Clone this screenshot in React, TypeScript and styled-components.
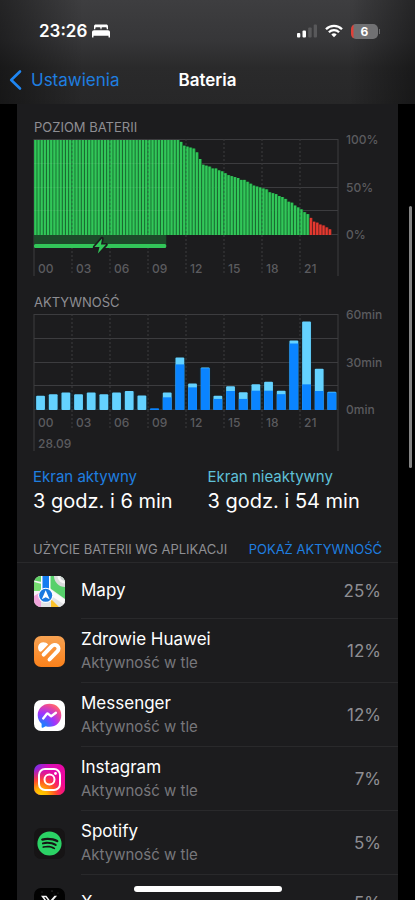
import React from "react";
import styled, { createGlobalStyle } from "styled-components";
import { FaSpotify, FaXTwitter } from "react-icons/fa6";

const color = {
  card: "#1c1c1e",
  text: "#ffffff",
  muted: "#8e8e93",
  axis: "#5b5b5f",
  grid: "#3c3c3f",
  link: "#1f7fe0",
  blue: "#0a84ff",
  cyan: "#64d2ff",
  green: "#32c759",
  red: "#e5392f",
};

const GlobalStyle = createGlobalStyle`
  * { box-sizing: border-box; }
  body {
    margin: 0;
    background: #000;
    color: ${color.text};
    font-family: Inter, "Liberation Sans", sans-serif;
  }
`;

const Screen = styled.div`
  position: relative;
  height: 100vh;
  overflow: hidden;
  display: flex;
  flex-direction: column;
`;

const TopBar = styled.header`
  flex: none;
  background:
    linear-gradient(90deg, rgba(0, 0, 0, 0.42), rgba(0, 0, 0, 0) 20%, rgba(0, 0, 0, 0) 84%, rgba(0, 0, 0, 0.4)),
    linear-gradient(180deg, #3e3e40, #363638 40%, #2a2a2b 65%, #272728);
`;

const StatusBar = styled.div`
  display: flex;
  justify-content: space-between;
  align-items: center;
  height: 60px;
  padding: 2px 35px 0 39px;
`;

const StatusGroup = styled.div<{ $gap: number }>`
  display: flex;
  align-items: center;
  gap: ${(p) => p.$gap}px;
`;

const Clock = styled.time`
  font-size: 17px;
  line-height: 20px;
  font-weight: 600;
`;

const NavBar = styled.nav`
  display: grid;
  grid-template-columns: 1fr auto 1fr;
  align-items: center;
  height: 44px;
  padding: 0 8px 4px;
`;

const BackLink = styled.a`
  display: flex;
  align-items: center;
  gap: 8px;
  color: ${color.link};
  font-size: 17px;
  line-height: 22px;
  text-decoration: none;
`;

const NavTitle = styled.h1`
  margin: 0;
  font-size: 17px;
  line-height: 22px;
  font-weight: 600;
`;

const Card = styled.main`
  flex: none;
  margin: 0 17px;
  background: ${color.card};
`;

const ChartSection = styled.section`
  padding: 14px 0 1px 17px;
`;

const Caption = styled.h2`
  margin: 0;
  color: ${color.muted};
  font-size: 13px;
  line-height: 18px;
  font-weight: 400;
`;

const ChartBody = styled.div`
  display: flex;
  margin-top: 3px;
`;

const Plot = styled.svg`
  display: block;
  flex: 1;
  min-width: 0;
  height: 139px;
  overflow: visible;
`;

const AxisScale = styled.svg`
  display: block;
  flex: none;
  width: 60px;
  height: 139px;
  overflow: visible;
`;

const AxisText = styled.text`
  fill: ${color.axis};
  font-size: 12px;
  font-weight: 500;
`;

const Summary = styled.section`
  display: grid;
  grid-template-columns: 1fr 1fr;
  padding: 13px 16px 0;
`;

const SummaryLabel = styled.div<{ $tone: string }>`
  color: ${(p) => p.$tone};
  font-size: 15px;
  line-height: 20px;
`;

const SummaryValue = styled.div`
  font-size: 20px;
  line-height: 28px;
`;

const ListHeader = styled.div`
  display: flex;
  justify-content: space-between;
  align-items: center;
  height: 48px;
  padding: 20px 16px 0;
  border-bottom: 1px solid #29292b;
  white-space: nowrap;
`;

const TextButton = styled.button`
  padding: 0;
  border: 0;
  background: none;
  color: ${color.link};
  font: inherit;
  font-size: 13px;
  line-height: 18px;
`;

const AppList = styled.ul`
  margin: 0;
  padding: 0;
  list-style: none;
`;

const AppRow = styled.li`
  display: flex;
  align-items: center;
  gap: 16px;
  padding-left: 17px;
`;

const AppIcon = styled.svg`
  flex: none;
  width: 31px;
  height: 31px;
  border-radius: 7px;
`;

const AppDetails = styled.div<{ $tall: boolean }>`
  flex: 1;
  display: flex;
  align-items: center;
  justify-content: space-between;
  height: ${(p) => (p.$tall ? 64 : 56)}px;
  padding-right: 17px;
  border-bottom: 1px solid #29292b;
`;

const AppName = styled.div`
  font-size: 17px;
  line-height: 23px;
`;

const AppNote = styled.div`
  color: #77777b;
  font-size: 15px;
  line-height: 23px;
`;

const Percent = styled.div`
  color: ${color.muted};
  font-size: 17px;
  line-height: 24px;
`;

const ScrollThumb = styled.div`
  position: absolute;
  top: 206px;
  right: 3px;
  width: 3px;
  height: 262px;
  border-radius: 2px;
  background: #858585;
`;

const HomeIndicator = styled.div`
  position: absolute;
  bottom: 8px;
  left: 50%;
  width: 148px;
  height: 6px;
  margin-left: -74px;
  border-radius: 3px;
  background: #fff;
`;

const batteryLevels: number[] = [
  ...Array(46).fill(100),
  98, 94, 93, 92, 91, 87, 80, 74, 73, 72, 70, 70, 68, 67, 65, 63, 62, 61, 60, 58, 58, 56, 54, 52,
  51, 50, 49, 48, 45, 44, 43, 41, 40, 38, 35, 34, 31, 29, 27, 24, 22, 18, 14, 13, 11, 10, 8, 6,
];
const LOW_FROM = 87;

/* Minutes per hour: [screen on, screen off] */
const activity: [number, number][] = [
  [0, 9], [0, 10], [0, 11], [0, 10], [0, 11], [0, 10], [0, 11], [0, 12],
  [0, 9.2], [0.9, 0], [8, 3.1], [28.8, 4.4], [14.3, 2.5], [26.4, 0.5], [7, 2], [12, 3],
  [7, 4.2], [12.2, 4], [12.2, 5.7], [10, 2.2], [42, 1.9], [16.2, 39.7], [12, 14], [11.1, 0.4],
];

const hours = ["00", "03", "06", "09", "12", "15", "18", "21"];
const PLOT_H = 95;
const pct = (n: number) => `${n}%`;

function Grid({ dashEnd }: { dashEnd: number }) {
  return (
    <g stroke={color.grid} strokeWidth="1">
      {[0, 1, 2, 3, 4].map((n) => (
        <line key={n} x1="0" x2="100%" y1={0.5 + Math.round((PLOT_H * n) / 4)} y2={0.5 + Math.round((PLOT_H * n) / 4)} />
      ))}
      {hours.map((h, n) => (
        <line
          key={h}
          x1={pct(n * 12.5)}
          x2={pct(n * 12.5)}
          y1="0"
          y2={n === 0 ? 137 : dashEnd}
          strokeDasharray={n === 0 ? undefined : "2 2"}
        />
      ))}
      <line x1="100%" x2="100%" y1="0" y2="137" />
    </g>
  );
}

function HourLabels({ y }: { y: number }) {
  return (
    <>
      {hours.map((h, n) => (
        <AxisText key={h} x={pct(n * 12.5)} dx="4" y={y}>
          {h}
        </AxisText>
      ))}
    </>
  );
}

function Scale({ labels }: { labels: string[] }) {
  return (
    <AxisScale>
      {labels.map((label, n) => (
        <AxisText key={label} x="8" y={5 + (PLOT_H / 2) * n}>
          {label}
        </AxisText>
      ))}
    </AxisScale>
  );
}

function BatteryChart() {
  const slot = 100 / 96;
  return (
    <ChartBody>
      <Plot role="img" aria-label="Poziom baterii">
        <Grid dashEnd={136} />
        {batteryLevels.map((level, n) => {
          const h = (level / 100) * PLOT_H;
          const low = n >= LOW_FROM;
          return (
            <g key={n}>
              <rect x={pct(n * slot)} y={96 - h} width={pct(slot)} height={h} fill={low ? "#7d2624" : "#1b7e38"} />
              <rect x={pct(n * slot + 0.1)} y={96 - h} width={pct(slot * 0.66)} height={h} fill={low ? color.red : color.green} />
            </g>
          );
        })}
        {[24, 48, 71].map((y) => (
          <line key={y} x1="0" x2="46%" y1={y + 0.5} y2={y + 0.5} stroke="#fff" strokeOpacity="0.06" />
        ))}
        {[1, 2, 3, 4, 5, 6, 7].map((n) => (
          <line key={n} x1={pct(n * 12.5)} x2={pct(n * 12.5)} y1="0" y2="96" stroke="#303034" strokeOpacity="0.4" strokeDasharray="2 2" />
        ))}
        <rect x="0" y="96" width="43.5%" height="10" fill="#1d4b2a" />
        <rect x="0" y="105" width="43.5%" height="4" rx="1.5" fill={color.green} />
        <svg x="21.8%" y="107" overflow="visible">
          <path
            d="M1.8-7.6-5.8 1.1H-.8L-2.4 7.6 5.8-1.4H.7Z"
            fill={color.green}
            stroke={color.card}
            strokeWidth="3.4"
            strokeLinejoin="round"
            paintOrder="stroke"
          />
        </svg>
        <HourLabels y={134} />
      </Plot>
      <Scale labels={["100%", "50%", "0%"]} />
    </ChartBody>
  );
}

function ActivityChart() {
  const slot = 100 / 24;
  const unit = PLOT_H / 60;
  return (
    <ChartBody>
      <Plot role="img" aria-label="Aktywność">
        <Grid dashEnd={115} />
        {activity.map(([on, off], n) => {
          const total = (on + off) * unit;
          const x = pct(n * slot + 0.7);
          return (
            <g key={n}>
              <rect x={pct(n * slot)} y={96 - total} width={pct(slot)} height={total} fill="#0d2b3c" fillOpacity={n < 10 ? 0.5 : 0.25} />
              <rect x={x} y={96 - total} width="2.9%" height={total} rx="1" fill={off ? color.cyan : color.blue} />
              <rect x={x} y={96 - on * unit} width="2.9%" height={on * unit} fill={color.blue} />
            </g>
          );
        })}
        <HourLabels y={113} />
        <AxisText x="0" dx="4" y="134">
          28.09
        </AxisText>
      </Plot>
      <Scale labels={["60min", "30min", "0min"]} />
    </ChartBody>
  );
}

function BedIcon() {
  return (
    <svg width="18" height="14" viewBox="0 0 18 14" fill="#fff" aria-hidden="true">
      <path d="M2 5.3V2.2C2 1 2.8.4 3.8.4h10.4c1 0 1.8.6 1.8 1.8v3.1h-1.3V4.2c0-.6-.3-.9-.9-.9h-3.4c-.6 0-.9.3-.9.9v1.1h-1V4.2c0-.6-.3-.9-.9-.9H4.2c-.6 0-.9.3-.9.9v1.1Z" />
      <path d="M0 13V8.2C0 7 .8 6.2 2 6.2h14c1.2 0 2 .8 2 2V13c0 .4-.2.6-.6.6h-.3c-.4 0-.6-.2-.6-.6v-1.3h-15V13c0 .4-.2.6-.6.6H.6C.2 13.6 0 13.4 0 13Z" />
    </svg>
  );
}

function SignalIcon() {
  return (
    <svg width="20" height="14" viewBox="0 0 20 14" fill="#fff" aria-hidden="true">
      <rect x="0" y="9" width="3.3" height="4.5" rx="1" />
      <rect x="5.5" y="6.5" width="3.5" height="7" rx="1" />
      <rect x="11.2" y="3.5" width="3.5" height="10" rx="1" fill="#58585a" />
      <rect x="16.7" y="0.5" width="3.3" height="13" rx="1" fill="#58585a" />
    </svg>
  );
}

function WifiIcon() {
  return (
    <svg width="18" height="14" viewBox="0 0 18 14" fill="none" stroke="#fff" strokeWidth="2.3" aria-hidden="true">
      <path d="M1 5.2a11.3 11.3 0 0 1 16 0" />
      <path d="M3.9 8.3a7.2 7.2 0 0 1 10.2 0" />
      <path d="M9 13.3 6.3 10.6a3.8 3.8 0 0 1 5.4 0Z" fill="#fff" stroke="none" />
    </svg>
  );
}

const Battery = styled.div`
  display: flex;
  align-items: center;
  gap: 1px;
`;

const BatteryShell = styled.div`
  width: 27px;
  height: 15px;
  border-radius: 5px;
  background: linear-gradient(90deg, #e04038 2px, #717173 3px);
  font-size: 12px;
  line-height: 15px;
  font-weight: 700;
  text-align: center;
`;

const BatteryTip = styled.div`
  width: 1px;
  height: 5px;
  background: #6a6a6c;
`;

function MapsIcon() {
  return (
    <AppIcon viewBox="0 0 31 31" aria-hidden="true">
      <rect width="31" height="31" fill="#eef0ee" />
      <path d="M0 0h8v14H0Z" fill="#5fd164" />
      <path d="M0 7h8v8H0Z" fill="#75dc70" />
      <path d="M0 4.5 8 6v2L0 6Z" fill="#f4f5f2" />
      <path d="M15 0h16v23L15 11.5Z" fill="#56d06b" />
      <path d="M20 0a11 11 0 0 0 11 11V0Z" fill="#d9dadb" />
      <path d="M23.5 0A7.5 7.5 0 0 0 31 7.5V0Z" fill="#f5f5f5" />
      <path d="M26 0a5 5 0 0 0 5 5V0Z" fill="#cfd1d2" />
      <path d="M0 15h8l2 16H0Z" fill="#f0a4db" />
      <path d="M0 15h5v2L0 20Z" fill="#f5f3f5" />
      <path d="M7 20h9l15 6v5H7Z" fill="#e2e3e5" />
      <path d="M17 31V23l8 8Z" fill="#fbc22c" />
      <path d="M14 12 31 24v5L13 17Z" fill="#fafafa" />
      <path d="M7 0h1.5v15H7ZM15 0h1.5v15H15Z" fill="#fff" />
      <path d="M8.5 0H15v15H8.5Z" fill="#147cf0" />
      <circle cx="11.7" cy="19.3" r="7.6" fill="#fff" />
      <circle cx="11.7" cy="19.3" r="6.5" fill="#1879df" />
      <path d="m11.7 14.2 3.9 9.1-3.9-2-3.9 2Z" fill="#fff" />
    </AppIcon>
  );
}

function HealthIcon() {
  return (
    <AppIcon viewBox="0 0 31 31" aria-hidden="true">
      <defs>
        <linearGradient id="health" x1="0" y1="0" x2="0" y2="1">
          <stop stopColor="#f7a252" />
          <stop offset="1" stopColor="#fb811b" />
        </linearGradient>
      </defs>
      <rect width="31" height="31" fill="url(#health)" />
      <path
        d="m9.600 18.700 7.700-8.100c1.800-1.900 4.200-2.300 5.900-.9 1.800 1.600 1.800 3.800.1 5.600l-7.800 8.200"
        fill="none"
        stroke="#fff"
        strokeWidth="3.900"
        strokeLinecap="round"
        strokeLinejoin="round"
      />
      <path d="M4.300 13.300C3.400 9.300 5.900 6.300 9.200 6.300c2 0 3.800.8 4.900 2.100l-6.500 6.900c-1.300 1.200-2.900-.1-3.300-2Z" fill="#fff" />
    </AppIcon>
  );
}

function MessengerIcon() {
  return (
    <AppIcon viewBox="0 0 31 31" aria-hidden="true">
      <defs>
        <radialGradient id="messenger" cx="0.15" cy="1" r="1.1">
          <stop stopColor="#0a8cff" />
          <stop offset="0.25" stopColor="#3a6cff" />
          <stop offset="0.55" stopColor="#a033ff" />
          <stop offset="0.85" stopColor="#e8469f" />
          <stop offset="1" stopColor="#ff6870" />
        </radialGradient>
      </defs>
      <rect width="31" height="31" fill="#fff" />
      <path
        d="M15.500 3.800C8.700 3.800 3.700 8.700 3.700 15.200c0 3.500 1.500 6.500 3.900 8.600V27c0 .7.600 1 1.200.7l2.900-1.400c1.200.4 2.500.5 3.800.5 6.800 0 11.800-5 11.800-11.600S22.300 3.800 15.500 3.800Z"
        fill="url(#messenger)"
      />
      <path d="m9.200 18.400 3.500-4.400c.4-.5 1-.5 1.500-.2l3 2.500 4.700-3.600" fill="none" stroke="#fff" strokeWidth="2.400" strokeLinecap="round" strokeLinejoin="round" />
    </AppIcon>
  );
}

function InstagramIcon() {
  return (
    <AppIcon viewBox="0 0 31 31" aria-hidden="true">
      <defs>
        <linearGradient id="insta-base" x1="0" y1="0" x2="1" y2="0.3">
          <stop stopColor="#6a35ee" />
          <stop offset="0.45" stopColor="#d80fb8" />
          <stop offset="1" stopColor="#ee079f" />
        </linearGradient>
        <radialGradient id="insta-glow" cx="0.2" cy="1.05" r="0.95">
          <stop stopColor="#ffd600" />
          <stop offset="0.25" stopColor="#ffb300" />
          <stop offset="0.55" stopColor="#ff4a2c" />
          <stop offset="1" stopColor="#ff0080" stopOpacity="0" />
        </radialGradient>
      </defs>
      <rect width="31" height="31" fill="url(#insta-base)" />
      <rect width="31" height="31" fill="url(#insta-glow)" />
      <g fill="none" stroke="#fff" strokeWidth="2">
        <rect x="5" y="5" width="21" height="21" rx="6" />
        <circle cx="15.5" cy="15.5" r="5" />
      </g>
      <circle cx="21.5" cy="9.5" r="1.4" fill="#fff" />
    </AppIcon>
  );
}

function SpotifyIcon() {
  return (
    <AppIcon viewBox="0 0 31 31" aria-hidden="true">
      <rect width="31" height="31" fill="#161415" />
      <FaSpotify x="3" y="3" size={25} color="#2bd265" />
    </AppIcon>
  );
}

function XIcon() {
  return (
    <AppIcon viewBox="0 0 31 31" aria-hidden="true">
      <rect width="31" height="31" fill="#020202" />
      <g fill="#77777a">
        <circle cx="8" cy="4" r="0.4" />
        <circle cx="18" cy="3" r="0.5" />
        <circle cx="24" cy="5" r="0.4" />
        <circle cx="20" cy="6" r="0.3" />
      </g>
      <FaXTwitter x="6" y="6" size={19} color="#f2f2f2" />
    </AppIcon>
  );
}

interface AppUsage {
  name: string;
  share: string;
  background: boolean;
  Icon: () => React.JSX.Element;
}

const apps: AppUsage[] = [
  { name: "Mapy", share: "25%", background: false, Icon: MapsIcon },
  { name: "Zdrowie Huawei", share: "12%", background: true, Icon: HealthIcon },
  { name: "Messenger", share: "12%", background: true, Icon: MessengerIcon },
  { name: "Instagram", share: "7%", background: true, Icon: InstagramIcon },
  { name: "Spotify", share: "5%", background: true, Icon: SpotifyIcon },
  { name: "X", share: "5%", background: false, Icon: XIcon },
];

export default function App() {
  return (
    <Screen>
      <GlobalStyle />
      <TopBar>
        <StatusBar>
          <StatusGroup $gap={5}>
            <Clock>23:26</Clock>
            <BedIcon />
          </StatusGroup>
          <StatusGroup $gap={8}>
            <SignalIcon />
            <WifiIcon />
            <Battery>
              <BatteryShell>6</BatteryShell>
              <BatteryTip />
            </Battery>
          </StatusGroup>
        </StatusBar>
        <NavBar>
          <BackLink href="#ustawienia">
            <svg width="15" height="22" viewBox="0 0 15 22" fill="none" aria-hidden="true">
              <path d="M12 2.5 3.2 11 12 19.5" stroke="#1f86f2" strokeWidth="2.6" strokeLinecap="round" strokeLinejoin="round" />
            </svg>
            Ustawienia
          </BackLink>
          <NavTitle>Bateria</NavTitle>
        </NavBar>
      </TopBar>
      <Card>
        <ChartSection>
          <Caption>POZIOM BATERII</Caption>
          <BatteryChart />
        </ChartSection>
        <ChartSection>
          <Caption>AKTYWNOŚĆ</Caption>
          <ActivityChart />
        </ChartSection>
        <Summary>
          <div>
            <SummaryLabel $tone={color.link}>Ekran aktywny</SummaryLabel>
            <SummaryValue>3 godz. i 6 min</SummaryValue>
          </div>
          <div>
            <SummaryLabel $tone="#5fc0d8">Ekran nieaktywny</SummaryLabel>
            <SummaryValue>3 godz. i 54 min</SummaryValue>
          </div>
        </Summary>
        <ListHeader>
          <Caption>UŻYCIE BATERII WG APLIKACJI</Caption>
          <TextButton type="button">POKAŻ AKTYWNOŚĆ</TextButton>
        </ListHeader>
        <AppList>
          {apps.map(({ name, share, background, Icon }) => (
            <AppRow key={name}>
              <Icon />
              <AppDetails $tall={background}>
                <div>
                  <AppName>{name}</AppName>
                  {background && <AppNote>Aktywność w tle</AppNote>}
                </div>
                <Percent>{share}</Percent>
              </AppDetails>
            </AppRow>
          ))}
        </AppList>
      </Card>
      <ScrollThumb />
      <HomeIndicator />
    </Screen>
  );
}
